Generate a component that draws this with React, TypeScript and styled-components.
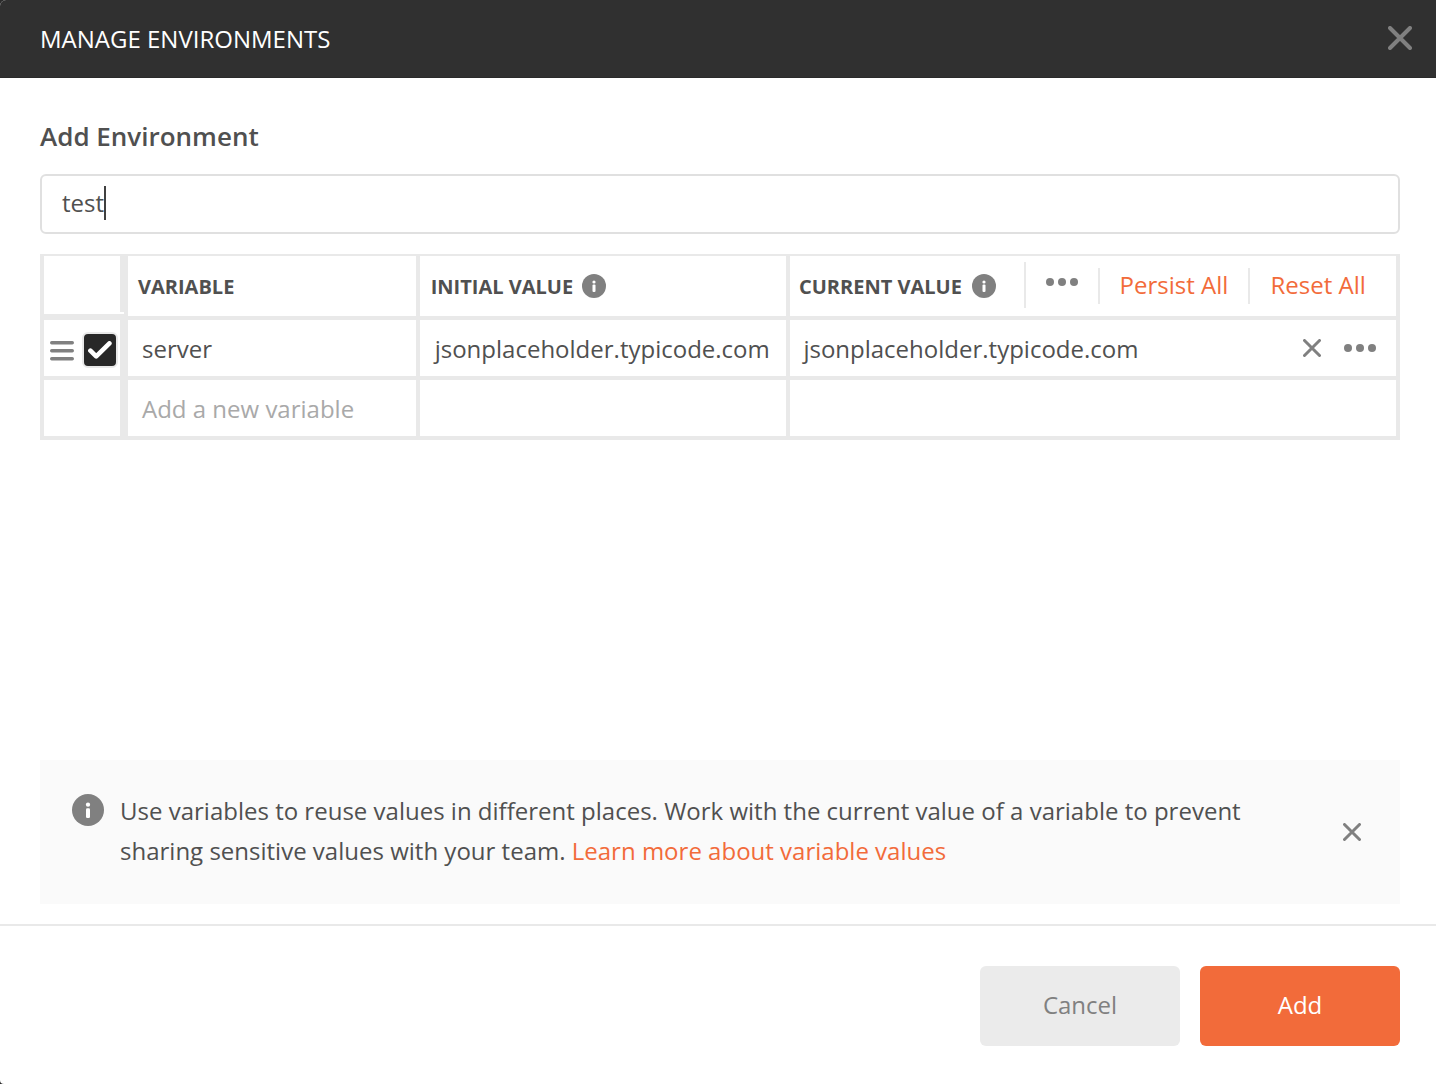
import React from "react";
import styled, { createGlobalStyle } from "styled-components";

const GlobalStyle = createGlobalStyle`
  *, *::before, *::after { box-sizing: border-box; }
  body {
    margin: 0;
    background: #2b2b2b;
    font-family: "Open Sans", "Noto Sans", sans-serif;
    font-size: 24px;
    color: #505050;
  }
  svg { display: block; flex: none; }
`;

const Modal = styled.main`
  display: flex;
  flex-direction: column;
  width: 1436px;
  height: 1084px;
  background: #fff;
  border-radius: 6px 0 0 4px;
  overflow: hidden;
`;

const Header = styled.header`
  display: flex;
  align-items: center;
  justify-content: space-between;
  height: 78px;
  padding: 0 24px 2px 40px;
  background: #303030;
  border-bottom: 1px solid #2a2a2a;
  color: #fff;
`;

const Title = styled.h1`
  margin: 0;
  padding-top: 2px;
  font-size: 24px;
  font-weight: 400;
  line-height: 34px;
`;

const IconButton = styled.button`
  display: flex;
  padding: 0;
  border: 0;
  background: none;
  color: #808080;
`;

const Body = styled.section`
  display: flex;
  flex-direction: column;
  flex: 1;
  padding: 40px 36px 20px 40px;
`;

const Subtitle = styled.h2`
  margin: 0 0 20px;
  font-size: 26px;
  font-weight: 600;
  line-height: 36px;
  height: 36px;
`;

const NameField = styled.div`
  display: flex;
  align-items: flex-start;
  height: 60px;
  margin-bottom: 20px;
  padding: 10px 20px 0;
  border: 2px solid #e0e0e0;
  border-radius: 6px;
  line-height: 34px;
`;

const Caret = styled.span`
  width: 2px;
  height: 34px;
  background: #404040;
`;

const Table = styled.div`
  display: flex;
  flex-direction: column;
  gap: 4px;
  padding: 2px 4px 4px;
  background: #e9e9e9;
`;

const Row = styled.div<{ $height: number }>`
  display: grid;
  grid-template-columns: 80px 288px 366px 606px;
  column-gap: 4px;
  height: ${(p) => p.$height}px;
`;

const Cell = styled.div<{ $inset?: number; $muted?: boolean }>`
  display: flex;
  align-items: center;
  min-width: 0;
  padding-left: ${(p) => p.$inset ?? 14}px;
  background: #fff;
  color: ${(p) => (p.$muted ? "#a9a9a9" : "#505050")};
  white-space: nowrap;
  line-height: 34px;
`;

const CellText = styled.span`
  padding-top: 2px;
`;

const ControlCell = styled(Cell)`
  gap: 8px;
  margin-right: 4px;
  padding-left: 6px;
`;

const CornerCell = styled.div`
  display: grid;
  grid-template: 56px 2px / 76px 4px;
  height: 58px;
  background: #fff;

  &::before {
    content: "";
    grid-area: 1 / 2;
    background: #e9e9e9;
  }
`;

const HeadLabel = styled.span<{ $gap?: number }>`
  margin-right: ${(p) => p.$gap ?? 9}px;
  padding-top: 2px;
  font-size: 20px;
  font-weight: 700;
  line-height: 28px;
`;

const HeadActions = styled.div`
  display: flex;
  align-items: center;
  margin-left: 28px;
  padding-bottom: 2px;
`;

const Divider = styled.span<{ $height: number; $drop?: number }>`
  width: 2px;
  height: ${(p) => p.$height}px;
  margin-top: ${(p) => p.$drop ?? 0}px;
  background: #e9e9e9;
`;

const MoreSlot = styled.span`
  display: flex;
  padding: 0 20px 6px;
`;

const Link = styled.a<{ $pad?: number }>`
  padding: 0 ${(p) => p.$pad ?? 0}px;
  color: #f26b3a;
`;

const RowActions = styled.div`
  display: flex;
  align-items: center;
  gap: 23px;
  margin: 0 20px 0 auto;
`;

const Checkbox = styled.span`
  display: flex;
  align-items: center;
  justify-content: center;
  width: 36px;
  height: 36px;
  margin-top: 4px;
  border: 2px solid #e9e9e9;
  border-radius: 6px;
  background: #282828;
`;

const Handle = styled.span`
  display: flex;
  padding-top: 5px;
`;

const Tip = styled.aside`
  display: flex;
  align-items: center;
  height: 144px;
  margin-top: auto;
  padding: 0 39px 0 32px;
  background: #fafafa;
`;

const TipIcon = styled.span`
  align-self: flex-start;
  margin-top: 34px;
`;

const TipText = styled.p`
  flex: 1;
  margin: 0 0 0 16px;
  padding-bottom: 2px;
  line-height: 40px;
  letter-spacing: 0.005px;
`;

const Footer = styled.footer`
  display: flex;
  justify-content: flex-end;
  gap: 20px;
  height: 160px;
  padding: 40px 36px 0 0;
  border-top: 2px solid #e9e9e9;
`;

const Button = styled.button<{ $primary?: boolean }>`
  width: 200px;
  height: 80px;
  padding: 0 0 4px;
  border: 0;
  border-radius: 6px;
  background: ${(p) => (p.$primary ? "#f26b3a" : "#ebebeb")};
  color: ${(p) => (p.$primary ? "#fff" : "#808080")};
  font: inherit;
`;

const CloseIcon = ({ size, stroke }: { size: number; stroke: number }) => {
  const a = stroke / 2;
  const b = size - a;
  return (
    <svg width={size} height={size} fill="none" stroke="#808080" strokeWidth={stroke} strokeLinecap="round">
      <path d={`M${a} ${a}L${b} ${b}M${b} ${a}L${a} ${b}`} />
    </svg>
  );
};

const MoreIcon = () => (
  <svg width="32" height="8" fill="#808080">
    <circle cx="4" cy="4" r="4" />
    <circle cx="16" cy="4" r="4" />
    <circle cx="28" cy="4" r="4" />
  </svg>
);

const InfoIcon = ({ size = 24 }: { size?: number }) => (
  <svg width={size} height={size} viewBox="0 0 24 24">
    <circle cx="12" cy="12" r="12" fill="#808080" />
    <circle cx="12" cy="8" r="1.6" fill="#fff" />
    <rect x="10.5" y="10.6" width="3" height="7.4" rx="1" fill="#fff" />
  </svg>
);

const DragIcon = () => (
  <svg width="24" height="21" stroke="#808080" strokeWidth="3.4" strokeLinecap="round">
    <path d="M1.7 2.7H22.3M1.7 10.7H22.3M1.7 18.7H22.3" />
  </svg>
);

const CheckIcon = () => (
  <svg width="24" height="18" fill="none" stroke="#fff" strokeWidth="4.6" strokeLinecap="round" strokeLinejoin="round">
    <path d="M2.4 9.6L8.2 15.4L21.4 2.4" />
  </svg>
);

export default function App() {
  return (
    <>
      <GlobalStyle />
      <Modal>
        <Header>
          <Title>MANAGE ENVIRONMENTS</Title>
          <IconButton aria-label="Close">
            <CloseIcon size={24} stroke={4} />
          </IconButton>
        </Header>
        <Body>
          <Subtitle>Add Environment</Subtitle>
          <NameField>
            test
            <Caret />
          </NameField>
          <Table>
            <Row $height={60}>
              <CornerCell />
              <Cell $inset={10}>
                <HeadLabel>VARIABLE</HeadLabel>
              </Cell>
              <Cell $inset={10.7}>
                <HeadLabel>INITIAL VALUE</HeadLabel>
                <InfoIcon />
              </Cell>
              <Cell $inset={9}>
                <HeadLabel $gap={10}>CURRENT VALUE</HeadLabel>
                <InfoIcon />
                <HeadActions>
                  <Divider $height={46} />
                  <MoreSlot>
                    <MoreIcon />
                  </MoreSlot>
                  <Divider $height={36} $drop={2} />
                  <Link $pad={19.7}>Persist All</Link>
                  <Divider $height={36} $drop={2} />
                  <Link $pad={20.5}>Reset All</Link>
                </HeadActions>
              </Cell>
            </Row>
            <Row $height={56}>
              <ControlCell>
                <Handle>
                  <DragIcon />
                </Handle>
                <Checkbox>
                  <CheckIcon />
                </Checkbox>
              </ControlCell>
              <Cell>
                <CellText>server</CellText>
              </Cell>
              <Cell $inset={14.7}>
                <CellText>jsonplaceholder.typicode.com</CellText>
              </Cell>
              <Cell $inset={13.4}>
                <CellText>jsonplaceholder.typicode.com</CellText>
                <RowActions>
                  <CloseIcon size={18} stroke={3} />
                  <MoreIcon />
                </RowActions>
              </Cell>
            </Row>
            <Row $height={56}>
              <ControlCell />
              <Cell $muted>
                <CellText>Add a new variable</CellText>
              </Cell>
              <Cell />
              <Cell />
            </Row>
          </Table>
          <Tip>
            <TipIcon>
              <InfoIcon size={32} />
            </TipIcon>
            <TipText>
              Use variables to reuse values in different places. Work with the current value of a variable to prevent
              <br />
              sharing sensitive values with your team. <Link>Learn more about variable values</Link>
            </TipText>
            <IconButton aria-label="Dismiss">
              <CloseIcon size={18} stroke={3} />
            </IconButton>
          </Tip>
        </Body>
        <Footer>
          <Button>Cancel</Button>
          <Button $primary>Add</Button>
        </Footer>
      </Modal>
    </>
  );
}
